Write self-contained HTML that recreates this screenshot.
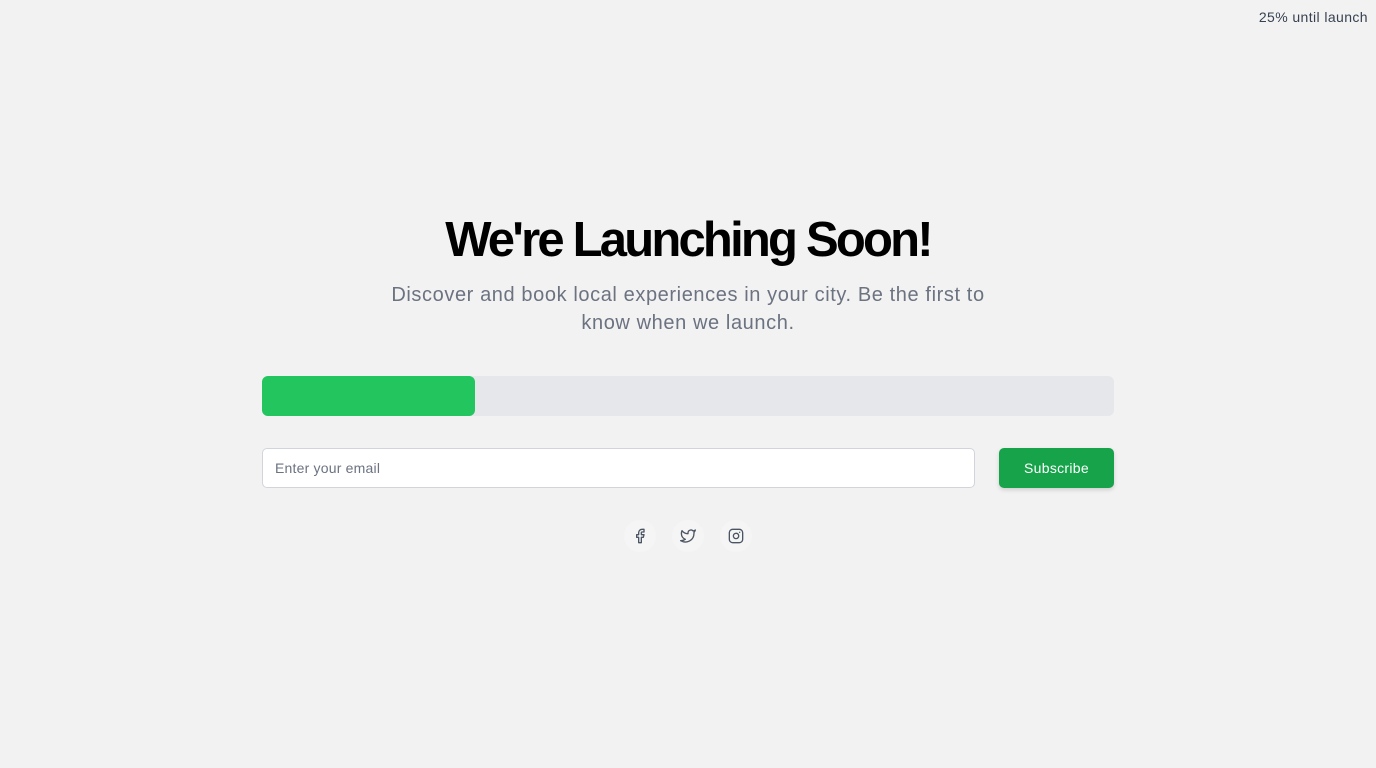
<!DOCTYPE html>
<html><head><meta charset="utf-8"><style>
*{box-sizing:border-box;margin:0;padding:0}
body{width:1376px;height:768px;background:#f2f2f2;font-family:"Liberation Sans",sans-serif;position:relative;overflow:hidden}
.top{position:absolute;right:8px;top:9px;font-size:14px;color:#374151;letter-spacing:.4px}
h1{position:absolute;left:0;width:1376px;top:210px;text-align:center;font-size:49px;font-weight:bold;letter-spacing:-2.8px;color:#000;line-height:60px}
.sub{position:absolute;left:378px;width:620px;top:281px;text-align:center;font-size:20px;line-height:28px;color:#6b7280;letter-spacing:.6px}
.bar{position:absolute;left:262px;top:376px;width:852px;height:40px;background:#e5e7eb;border-radius:6px}
.fill{width:213px;height:40px;background:#22c55e;border-radius:6px}
.inp{position:absolute;left:262px;top:448px;width:713px;height:40px;background:#fff;border:1px solid #d1d5db;border-radius:5px;padding-left:12px;font-size:14px;line-height:38px;color:#6b7280;letter-spacing:.2px}
.btn{position:absolute;left:999px;top:448px;width:115px;height:40px;background:#16a34a;border-radius:5px;color:#fff;font-size:14px;text-align:center;line-height:40px;box-shadow:0 2px 4px rgba(0,0,0,.15);letter-spacing:.3px}
.ic{position:absolute;top:520px;width:32px;height:32px;border-radius:50%;background:#f5f5f5;display:flex;align-items:center;justify-content:center}
</style></head><body>
<div class="top">25% until launch</div>
<h1>We're Launching Soon!</h1>
<div class="sub">Discover and book local experiences in your city. Be the first to know when we launch.</div>
<div class="bar"><div class="fill"></div></div>
<div class="inp">Enter your email</div>
<div class="btn">Subscribe</div>
<div class="ic" style="left:624px"><svg width="16" height="16" viewBox="0 0 24 24" fill="none" stroke="#4b5563" stroke-width="2" stroke-linecap="round" stroke-linejoin="round"><path d="M18 2h-3a5 5 0 0 0-5 5v3H7v4h3v8h4v-8h3l1-4h-4V7a1 1 0 0 1 1-1h3z"/></svg></div>
<div class="ic" style="left:672px"><svg width="16" height="16" viewBox="0 0 24 24" fill="none" stroke="#4b5563" stroke-width="2" stroke-linecap="round" stroke-linejoin="round"><path d="M23 3a10.9 10.9 0 0 1-3.14 1.53 4.48 4.48 0 0 0-7.860 3v1A10.66 10.66 0 0 1 3 4s-4 9 5 13a11.64 11.64 0 0 1-7 2c9 5 20 0 20-11.5a4.5 4.5 0 0 0-.08-.83A7.72 7.72 0 0 0 23 3z"/></svg></div>
<div class="ic" style="left:720px"><svg width="16" height="16" viewBox="0 0 24 24" fill="none" stroke="#4b5563" stroke-width="2" stroke-linecap="round" stroke-linejoin="round"><rect x="2" y="2" width="20" height="20" rx="5"/><path d="M16 11.37A4 4 0 1 1 12.63 8 4 4 0 0 1 16 11.37z"/><line x1="17.5" y1="6.5" x2="17.51" y2="6.5"/></svg></div>
</body></html>
